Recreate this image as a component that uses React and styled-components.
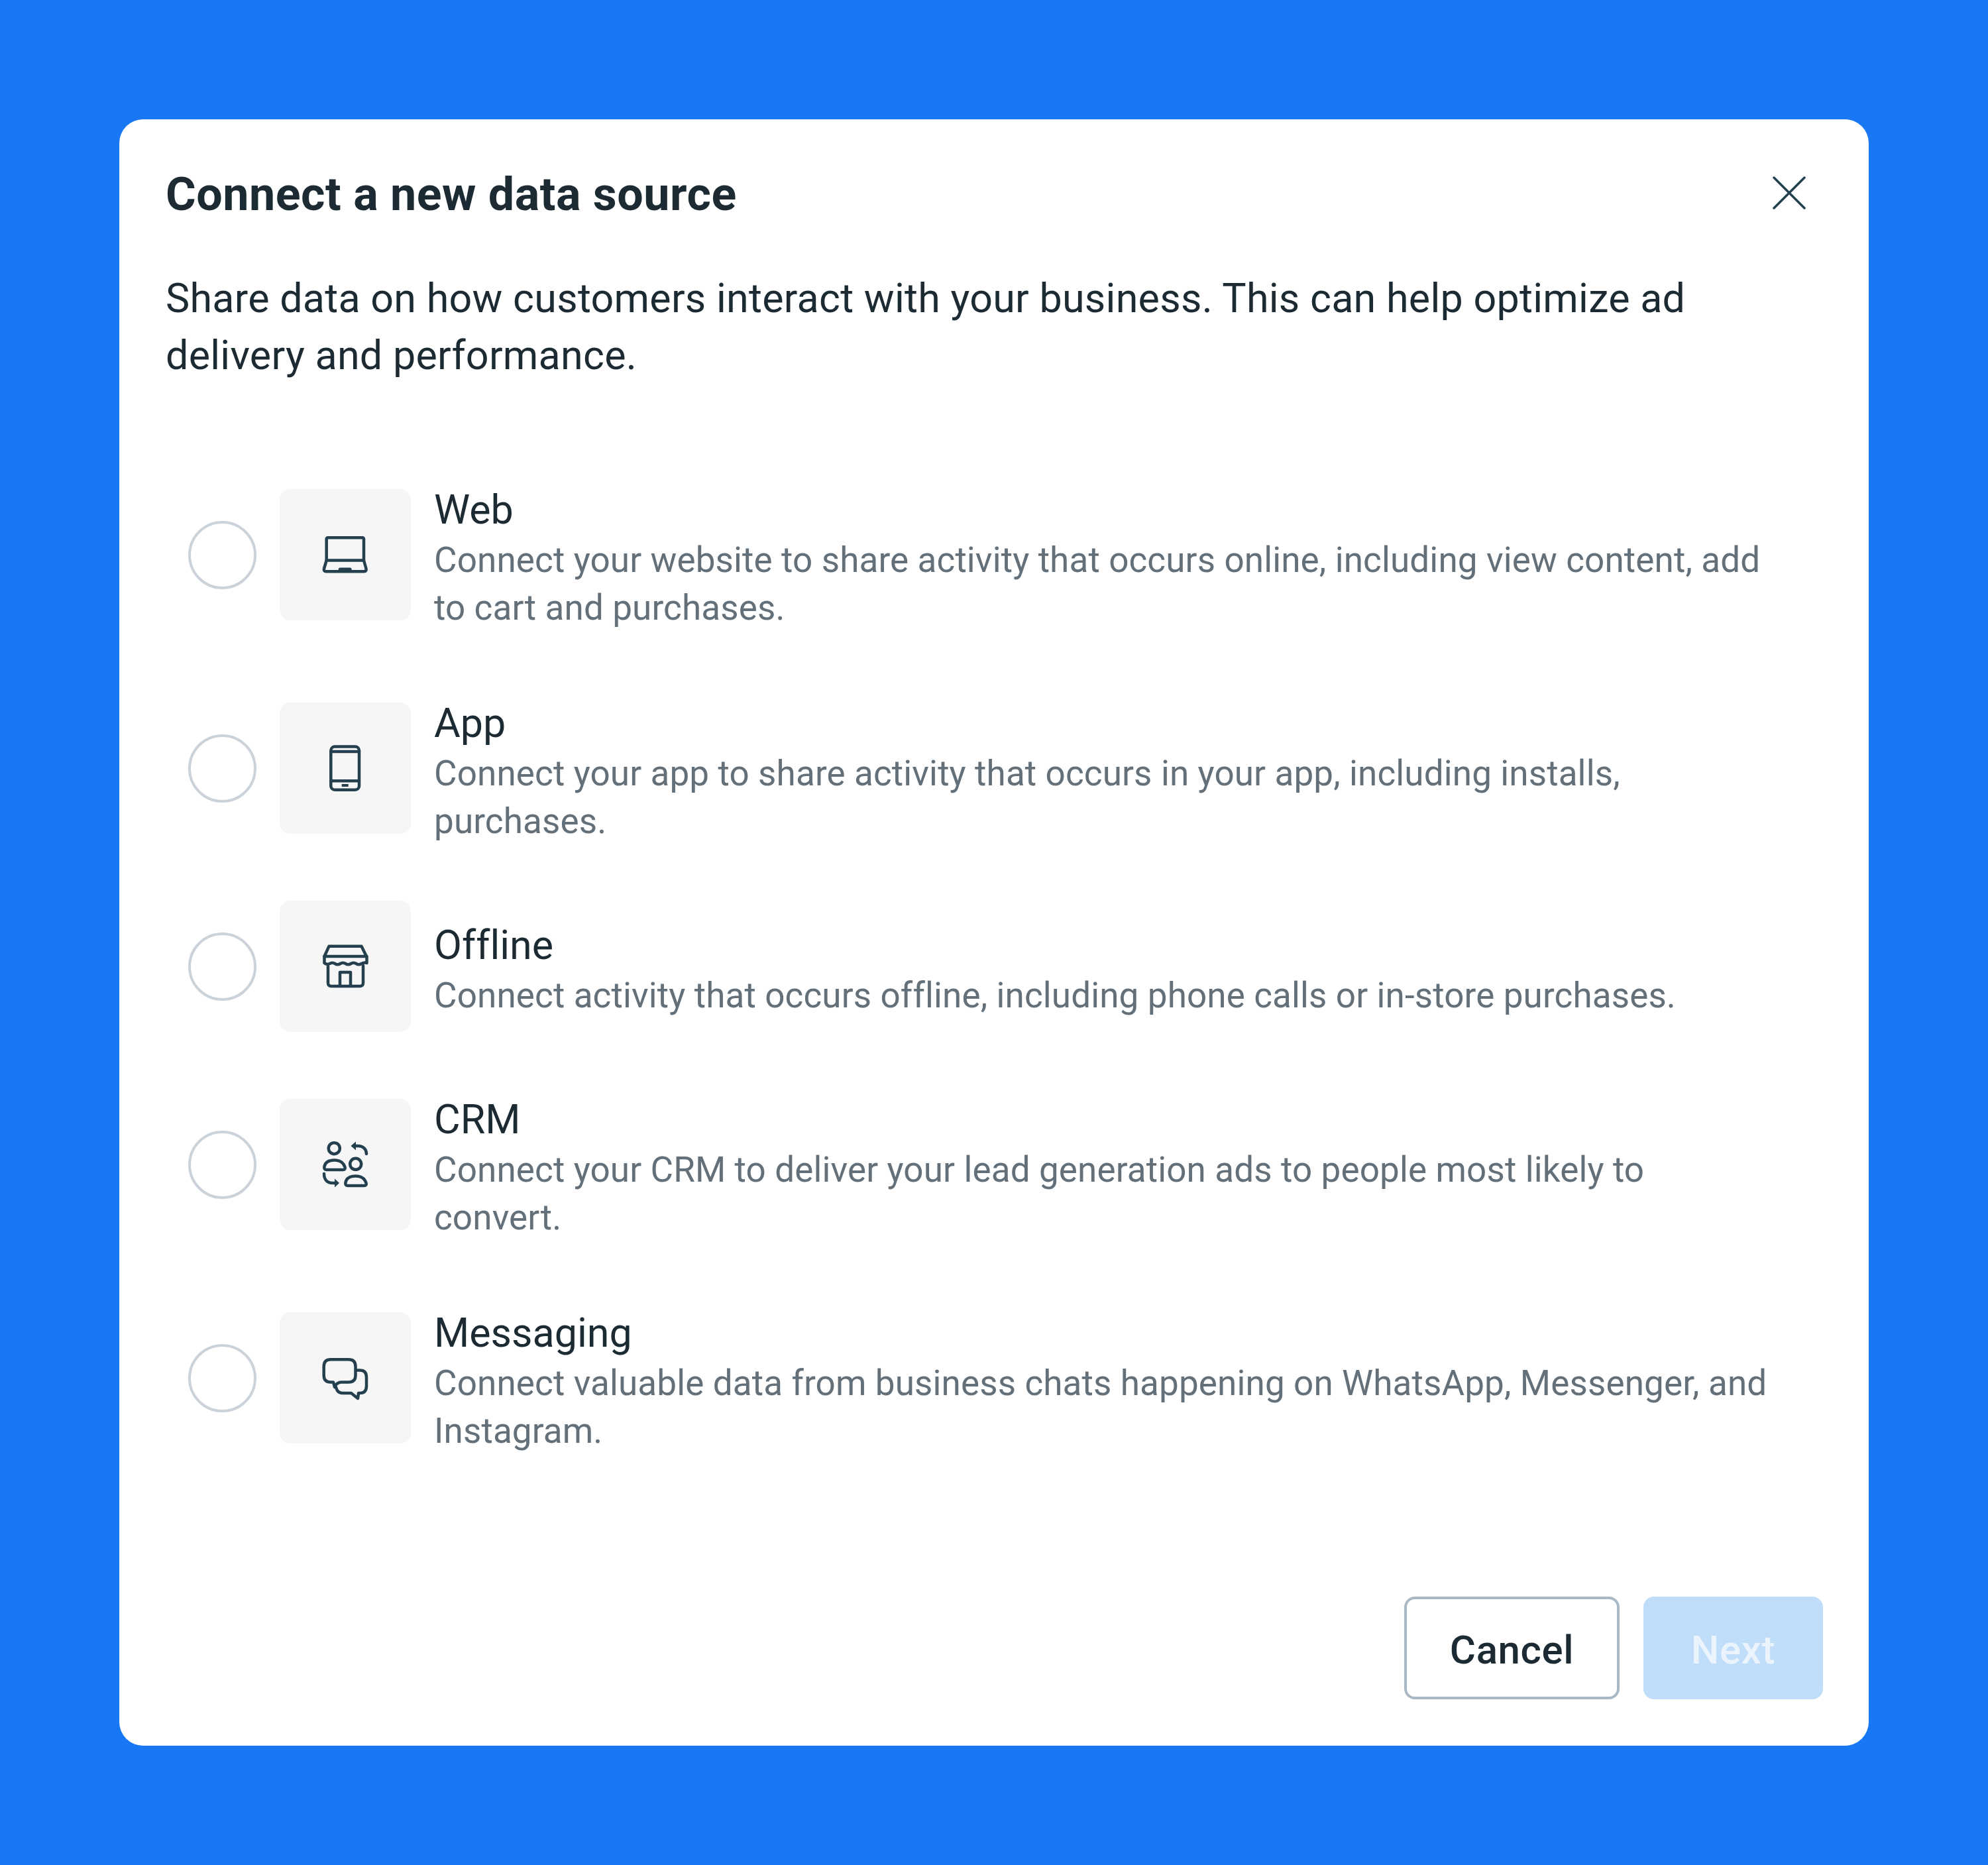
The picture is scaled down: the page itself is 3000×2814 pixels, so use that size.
import React from 'react';
import styled, { createGlobalStyle } from 'styled-components';

const GlobalStyle = createGlobalStyle`
  html, body {
    margin: 0;
    padding: 0;
    background: #1877f2;
  }
  * {
    box-sizing: border-box;
  }
`;

const Page = styled.div`
  width: 3000px;
  height: 2814px;
  padding: 180px;
  background: #1877f2;
  font-family: Roboto, "Noto Sans", sans-serif;
  font-variant-ligatures: none;
`;

const Modal = styled.div`
  width: 2640px;
  height: 2454px;
  padding: 70px 69px 70px 70px;
  background: #fff;
  border-radius: 36px;
  display: flex;
  flex-direction: column;
`;

const Header = styled.div`
  display: flex;
  align-items: center;
  justify-content: space-between;
  height: 86px;
`;

const Title = styled.h1`
  margin: 0;
  font-size: 70px;
  line-height: 86px;
  letter-spacing: 0.5px;
  font-weight: 700;
  color: #1c2b33;
`;

const CloseButton = styled.button`
  display: flex;
  padding: 0;
  margin: 0 26px 4px 0;
  border: 0;
  background: none;
`;

const Intro = styled.p`
  margin: 71px 0 0;
  width: 2400px;
  font-size: 61px;
  line-height: 86px;
  letter-spacing: 0.26px;
  color: #1c2b33;
`;

const List = styled.div`
  margin-top: 136px;
  display: flex;
  flex-direction: column;
  gap: 78px;
`;

const Row = styled.div`
  display: flex;
  align-items: center;
`;

const Radio = styled.span`
  flex: none;
  width: 103px;
  height: 103px;
  margin-left: 34px;
  border: 4px solid #cbd2d9;
  border-radius: 50%;
`;

const Tile = styled.div`
  flex: none;
  width: 198px;
  height: 198px;
  margin: 0 35px;
  border-radius: 16px;
  background: #f6f6f6;
  display: flex;
  align-items: center;
  justify-content: center;
`;

const Copy = styled.div`
  width: 2020px;
  padding: 14px 0 6px;
  display: flex;
  flex-direction: column;
`;

const Name = styled.div`
  font-size: 61px;
  line-height: 80px;
  color: #1c2b33;
`;

const Detail = styled.div`
  font-size: 53px;
  line-height: 72px;
  letter-spacing: 0.13px;
  color: #63707a;
`;

const Footer = styled.div`
  margin-top: auto;
  display: flex;
  justify-content: flex-end;
  gap: 36px;
`;

const Button = styled.button`
  height: 155px;
  width: ${(p) => p.$width}px;
  padding: 6px 0 0;
  border-radius: 16px;
  font-family: inherit;
  font-size: 60px;
  font-weight: 500;
  letter-spacing: 0.6px;
  border: ${(p) => (p.$primary ? '0' : '4px solid #a9b8c5')};
  background: ${(p) => (p.$primary ? '#c0ddf9' : '#fff')};
  color: ${(p) => (p.$primary ? '#ebf4fd' : '#1c2b33')};
`;

const Icon = styled.svg`
  width: 120px;
  height: 120px;
  fill: none;
  stroke: #24404f;
  stroke-width: 4.5;
  stroke-linecap: round;
  stroke-linejoin: round;
`;

const Solid = styled.path`
  fill: #24404f;
  stroke: none;
`;

const LaptopIcon = () => (
  <Icon viewBox="1 -3.5 120 120">
    <path d="M32.7 65V33a2 2 0 0 1 2-2.3H87a2 2 0 0 1 2 2.3V65" />
    <path d="M32.7 65H89L92.5 77.5Q93.2 81.7 89.5 81.7H32Q28.3 81.7 29 77.5Z" />
    <Solid d="M50.7 83V78.5Q50.7 76 53 76H68.5Q70.7 76 70.7 78.5V83Z" />
  </Icon>
);

const PhoneIcon = () => (
  <Icon viewBox="1 -2 120 120">
    <rect x="39.3" y="25.5" width="42.7" height="65.2" rx="6" />
    <path d="M39.3 33H82M39.3 77.3H82" />
    <Solid d="M55.7 82H65.7V86H55.7Z" />
  </Icon>
);

const StoreIcon = () => (
  <Icon viewBox="1 -2 120 120">
    <path d="M36.5 27.7H85.5L93 43H29.5Z" />
    <path d="M29.5 43V53Q33 56 37.5 54Q41.5 51.5 45.5 54Q49.5 56.5 53.5 54Q57.5 51.5 61.5 54Q65.5 56.5 69.5 54Q73.5 51.5 77.5 54Q81.5 56.5 85.5 54Q90 51.5 93.5 53V43" />
    <path d="M35 57V83Q35 88 40 88H83Q88 88 88 83V57" />
    <path d="M53 88V67H69V88" />
  </Icon>
);

const CrmIcon = () => (
  <Icon viewBox="1 -2 120 120">
    <circle cx="44.3" cy="33.7" r="8.5" />
    <path d="M33 66H57.5Q61.5 66 60.5 62C58 54 52 51.5 44.7 51.5C37 51.5 31 54 29.5 61Q28.5 66 33 66Z" />
    <circle cx="76.7" cy="57.3" r="8.5" />
    <path d="M65 90H89.5Q93.5 90 92.5 86C90 78 84 75.5 76.7 75.5C69 75.5 63 78 61.5 85Q60.5 90 65 90Z" />
    <path d="M93 42C93 35 88 30 80 30H74" />
    <Solid d="M77 23.5L69.5 30L77 36.5Z" />
    <path d="M29 72C29 80 33 86 42 86H48" />
    <Solid d="M45 79.5L52 86L45 92.5Z" />
  </Icon>
);

const MessagingIcon = () => (
  <Icon viewBox="1 -1 120 120">
    <path d="M39 31.3H66Q76.5 31.3 76.5 42V55Q76.5 65.5 66 65.5H55Q50 65.5 46.5 70L45 73L43 65.5H39Q28.7 65.5 28.7 55V42Q28.7 31.3 39 31.3Z" />
    <path d="M77 47.5H83Q93 47.5 93 58V71Q93 82 83 82H81L80 90L70 82H57Q49 82 47 73" />
  </Icon>
);

const sources = [
  {
    name: 'Web',
    icon: <LaptopIcon />,
    text: 'Connect your website to share activity that occurs online, including view content, add to cart and purchases.',
  },
  {
    name: 'App',
    icon: <PhoneIcon />,
    text: 'Connect your app to share activity that occurs in your app, including installs, purchases.',
  },
  {
    name: 'Offline',
    icon: <StoreIcon />,
    text: 'Connect activity that occurs offline, including phone calls or in-store purchases.',
  },
  {
    name: 'CRM',
    icon: <CrmIcon />,
    text: 'Connect your CRM to deliver your lead generation ads to people most likely to convert.',
  },
  {
    name: 'Messaging',
    icon: <MessagingIcon />,
    text: 'Connect valuable data from business chats happening on WhatsApp, Messenger, and Instagram.',
  },
];

export default function App() {
  return (
    <Page>
      <GlobalStyle />
      <Modal>
        <Header>
          <Title>Connect a new data source</Title>
          <CloseButton aria-label="Close">
            <svg width="50" height="50" viewBox="0 0 50 50" fill="none" stroke="#24404f" strokeWidth="3.5" strokeLinecap="round">
              <path d="M2 2L48 48M48 2L2 48" />
            </svg>
          </CloseButton>
        </Header>
        <Intro>
          Share data on how customers interact with your business. This can help optimize ad delivery and performance.
        </Intro>
        <List>
          {sources.map((s) => (
            <Row key={s.name}>
              <Radio />
              <Tile>{s.icon}</Tile>
              <Copy>
                <Name>{s.name}</Name>
                <Detail>{s.text}</Detail>
              </Copy>
            </Row>
          ))}
        </List>
        <Footer>
          <Button $width={325}>Cancel</Button>
          <Button $width={271} $primary>Next</Button>
        </Footer>
      </Modal>
    </Page>
  );
}
